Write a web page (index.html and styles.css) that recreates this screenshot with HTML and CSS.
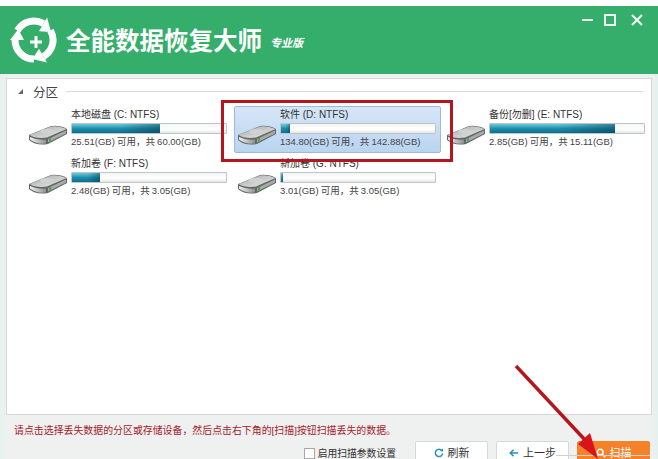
FILE: index.html
```html
<!DOCTYPE html>
<html lang="zh-CN">

<head>
    <meta charset="UTF-8" />
    <title>全能数据恢复大师</title>
    <link rel="stylesheet" href="styles.css">
</head>

<body>
    <svg class="svg-defs" width="0" height="0" aria-hidden="true">
        <defs>
            <linearGradient id="driveTop" x1="0" y1="0" x2="1" y2="1">
                <stop offset="0" stop-color="#a3a7a5" />
                <stop offset="1" stop-color="#eceeec" />
            </linearGradient>
            <linearGradient id="driveFront" x1="0" y1="0" x2="1" y2="0">
                <stop offset="0" stop-color="#f4f4f2" />
                <stop offset="1" stop-color="#8d918d" />
            </linearGradient>
            <symbol id="drive" viewBox="0 0 40 22">
                <path d="M1 11 L23 2 Q32 1 39 5 L39 10 L20 20 Q8 22 1 16 Z" fill="#62676a" />
                <path d="M1.5 11 L23 2.5 Q31 1.5 38.5 5 L19 13.5 Q8 15 1.5 11 Z" fill="url(#driveTop)" />
                <path d="M2 13 Q9 16.5 18 15.5 L18 19.5 Q8 20.5 2 15.5 Z" fill="url(#driveFront)" />
                <path d="M20 15 L38 6.5 L38 9.5 L20 18.5 Z" fill="#a6aaa8" />
                <rect x="21" y="14" width="2" height="3.5" fill="#4fa34a" />
                <ellipse cx="19" cy="7.5" rx="7" ry="2.6" fill="#cfd2d0" />
            </symbol>
        </defs>
    </svg>

    <div class="app">
        <header class="title-bar">
            <svg class="logo" viewBox="0 0 48 48" aria-hidden="true">
                <g fill="none" stroke="#fff" stroke-width="7">
                    <path d="M7.5 14.5 A19 19 0 0 1 33.5 7.5" />
                    <path d="M40.5 14.5 A19 19 0 0 1 33.5 40.5" />
                    <path d="M24 43 A19 19 0 0 1 5 24" />
                </g>
                <g fill="#fff">
                    <path d="M29 15.3 L37 1.5 L41.2 16 Z" />
                    <path d="M29 32.7 L37 46.5 L22.3 43 Z" />
                    <path d="M14 24 L0 24 L8.4 13 Z" />
                    <path d="M24.5 20 h3 v4.5 h4.5 v3 h-4.5 v4.5 h-3 v-4.5 h-4.5 v-3 h4.5 z" />
                </g>
            </svg>
            <h1 class="app-name">全能数据恢复大师</h1>
            <span class="edition">专业版</span>
            <div class="window-btns">
                <span class="win-min"></span>
                <span class="win-max"></span>
                <svg class="win-close" viewBox="0 0 12 12" aria-hidden="true">
                    <path d="M1 1 L11 11 M11 1 L1 11" stroke="#eef7f1" stroke-width="2.2" />
                </svg>
            </div>
        </header>

        <main class="content">
            <section class="panel">
                <div class="group-head">
                    <span class="caret"></span>
                    <span class="group-name">分区</span>
                    <span class="group-line"></span>
                </div>
                <div class="drive-grid">
                    <div class="drive">
                        <svg class="drive-icon"><use href="#drive" /></svg>
                        <div class="drive-info">
                            <div class="drive-name">本地磁盘 (C: NTFS)</div>
                            <div class="bar"><div class="bar-fill" style="width: 57%"></div></div>
                            <div class="drive-size">25.51(GB) 可用，共 60.00(GB)</div>
                        </div>
                    </div>
                    <div class="drive selected">
                        <svg class="drive-icon"><use href="#drive" /></svg>
                        <div class="drive-info">
                            <div class="drive-name">软件 (D: NTFS)</div>
                            <div class="bar"><div class="bar-fill" style="width: 5.6%"></div></div>
                            <div class="drive-size">134.80(GB) 可用，共 142.88(GB)</div>
                        </div>
                    </div>
                    <div class="drive">
                        <svg class="drive-icon"><use href="#drive" /></svg>
                        <div class="drive-info">
                            <div class="drive-name">备份[勿删] (E: NTFS)</div>
                            <div class="bar"><div class="bar-fill" style="width: 81%"></div></div>
                            <div class="drive-size">2.85(GB) 可用，共 15.11(GB)</div>
                        </div>
                    </div>
                    <div class="drive">
                        <svg class="drive-icon"><use href="#drive" /></svg>
                        <div class="drive-info">
                            <div class="drive-name">新加卷 (F: NTFS)</div>
                            <div class="bar"><div class="bar-fill" style="width: 18.5%"></div></div>
                            <div class="drive-size">2.48(GB) 可用，共 3.05(GB)</div>
                        </div>
                    </div>
                    <div class="drive">
                        <svg class="drive-icon"><use href="#drive" /></svg>
                        <div class="drive-info">
                            <div class="drive-name">新加卷 (G: NTFS)</div>
                            <div class="bar"><div class="bar-fill" style="width: 1.5%"></div></div>
                            <div class="drive-size">3.01(GB) 可用，共 3.05(GB)</div>
                        </div>
                    </div>
                </div>
            </section>

            <p class="hint">请点击选择丢失数据的分区或存储设备，然后点击右下角的[扫描]按钮扫描丢失的数据。</p>

            <div class="actions">
                <label class="scan-option">
                    <span class="checkbox"></span>
                    启用扫描参数设置
                </label>
                <button type="button" class="btn">
                    <svg class="btn-icon" viewBox="0 0 12 12" aria-hidden="true">
                        <path d="M9.6 3.2 A4.4 4.4 0 1 0 10.4 6.5" fill="none" stroke="#2b8fc0" stroke-width="1.8" />
                        <path d="M7 3.6 L11 4.4 L10.6 0.6 Z" fill="#2b8fc0" />
                    </svg>
                    刷新
                </button>
                <button type="button" class="btn">
                    <svg class="btn-icon" viewBox="0 0 12 12" aria-hidden="true">
                        <path d="M11 6 H2 M5.5 2 L1.5 6 L5.5 10" fill="none" stroke="#2b8fc0" stroke-width="1.8" />
                    </svg>
                    上一步
                </button>
                <button type="button" class="btn btn-scan">
                    <svg class="btn-icon" viewBox="0 0 12 12" aria-hidden="true">
                        <circle cx="5" cy="5" r="3.4" fill="none" stroke="#fff" stroke-width="1.8" />
                        <path d="M7.5 7.5 L11 11" stroke="#fff" stroke-width="2" />
                    </svg>
                    扫描
                </button>
            </div>
        </main>

        <!-- red marks drawn over the screenshot -->
        <div class="mark-box"></div>
        <svg class="mark-arrow" viewBox="0 0 658 459" aria-hidden="true">
            <path d="M556 455.5 H650" stroke="#d0d0d0" stroke-width="1" />
            <path d="M516 366 L586 441" stroke="#b5161e" stroke-width="3.4" />
            <path d="M590 433 L598 459 L578 444 Z" fill="#d8141a" />
        </svg>
    </div>
</body>

</html>
```

FILE: styles.css
```css
* {
    box-sizing: border-box;
}

html,
body {
    margin: 0;
    height: 100%;
    overflow: hidden;
}

body {
    font-family: "Liberation Sans", "Noto Sans CJK SC", sans-serif;
    font-size: 10px;
    color: #333;
    background: white;
}

.svg-defs {
    position: absolute;
}

.app {
    position: relative;
    width: 658px;
    height: 459px;
    padding-top: 6px;
    overflow: hidden;
}

.title-bar {
    display: flex;
    align-items: center;
    height: 68px;
    padding-left: 10px;
    color: white;
    background: #35ae6b;
}

.logo {
    flex: none;
    width: 48px;
    height: 48px;
    margin-right: 8px;
}

.app-name {
    margin: -2px 0 0 0;
    font-size: 24.5px;
    font-weight: bold;
    white-space: nowrap;
}

.edition {
    margin: 4px 0 0 8px;
    font-size: 11px;
    font-weight: bold;
    font-style: italic;
}

.window-btns {
    display: flex;
    align-items: center;
    gap: 11px;
    margin: -40px 0 0 auto;
    padding-right: 15px;
}

.win-min {
    width: 11px;
    height: 2px;
    background: #eef7f1;
}

.win-max {
    width: 12px;
    height: 12px;
    border: 2px solid #eef7f1;
}

.win-close {
    width: 12px;
    height: 12px;
    margin-left: 4px;
}

.content {
    height: 385px;
    padding: 4px 6px 0 6px;
    background: linear-gradient(90deg, #e3f3ef 0, #eff0f0 6px, #eff0f0 652px, #e3f1ef 100%);
}

.panel {
    height: 337px;
    padding: 0 0 0 8px;
    background: white;
    border: 1px solid #d6d8d8;
}

.group-head {
    display: flex;
    align-items: center;
    height: 22px;
    padding-top: 2px;
    padding-right: 8px;
}

.caret {
    width: 0;
    height: 0;
    margin-left: 3px;
    border-left: 5px solid transparent;
    border-bottom: 5px solid #666;
}

.group-name {
    margin-left: 10px;
    font-size: 12.5px;
    color: #444;
}

.group-line {
    flex: 1;
    height: 1px;
    margin-left: 8px;
    background: #d8dada;
}

.drive-grid {
    display: grid;
    grid-template-columns: repeat(3, 209px);
    grid-auto-rows: 49px;
    margin-top: 5px;
}

.drive {
    display: flex;
    align-items: flex-end;
    width: 207px;
    height: 47px;
    padding: 0 4px 0 3px;
    margin-left: 10px;
    border: 1px solid transparent;
    border-radius: 2px;
}

.drive.selected {
    background: linear-gradient(#d6e6f7, #b9d4f1);
    border-color: #9cbad8;
}

.drive-icon {
    flex: none;
    width: 40px;
    height: 22px;
    margin: 0 0 6px -1px;
}

.drive-info {
    flex: 1;
    min-width: 0;
    margin-left: 3px;
}

.drive-name {
    height: 13px;
    font-size: 10px;
    line-height: 12px;
    white-space: nowrap;
}

.bar {
    height: 11px;
    margin-top: 1px;
    background: linear-gradient(#f4f4f4, #fff 60%, #e6e6e6);
    border: 1px solid #bfc4c6;
    border-radius: 1px;
}

.bar-fill {
    height: 100%;
    background:
        linear-gradient(90deg, rgba(0, 50, 70, 0) 55%, rgba(0, 50, 70, 0.45) 100%),
        linear-gradient(#6ec9dc, #1d8fae 50%, #0d6f8e);
}

.drive-size {
    height: 18px;
    font-size: 9.5px;
    line-height: 16px;
    word-spacing: -0.5px;
    color: #444;
    white-space: nowrap;
}

.hint {
    margin: 9px 0 0 8px;
    font-size: 9.92px;
    line-height: 13px;
    color: #a5202b;
}

.actions {
    display: flex;
    align-items: flex-start;
    justify-content: flex-end;
    gap: 8px;
    margin-top: 4px;
    padding-right: 2px;
}

.scan-option {
    display: flex;
    align-items: center;
    height: 11px;
    margin: 7px 11px 0 0;
    font-size: 9.8px;
    line-height: 11px;
    gap: 3px;
}

.checkbox {
    width: 11px;
    height: 11px;
    background: white;
    border: 1px solid #a8a8a8;
}

.btn {
    display: flex;
    align-items: center;
    justify-content: center;
    gap: 4px;
    width: 73px;
    height: 30px;
    padding: 0 0 6px 0;
    font: inherit;
    font-size: 11px;
    line-height: 12px;
    color: #333;
    background: white;
    border: 1px solid #d8d8d8;
    border-radius: 2px;
}

.btn-icon {
    width: 10px;
    height: 10px;
}

.btn-scan {
    color: white;
    background: #f58128;
    border-color: #f58128;
}

.mark-box {
    position: absolute;
    left: 221px;
    top: 100px;
    width: 232px;
    height: 62px;
    border: 3px solid #b3161e;
}

.mark-arrow {
    position: absolute;
    left: 0;
    top: 0;
    width: 658px;
    height: 459px;
}
```
